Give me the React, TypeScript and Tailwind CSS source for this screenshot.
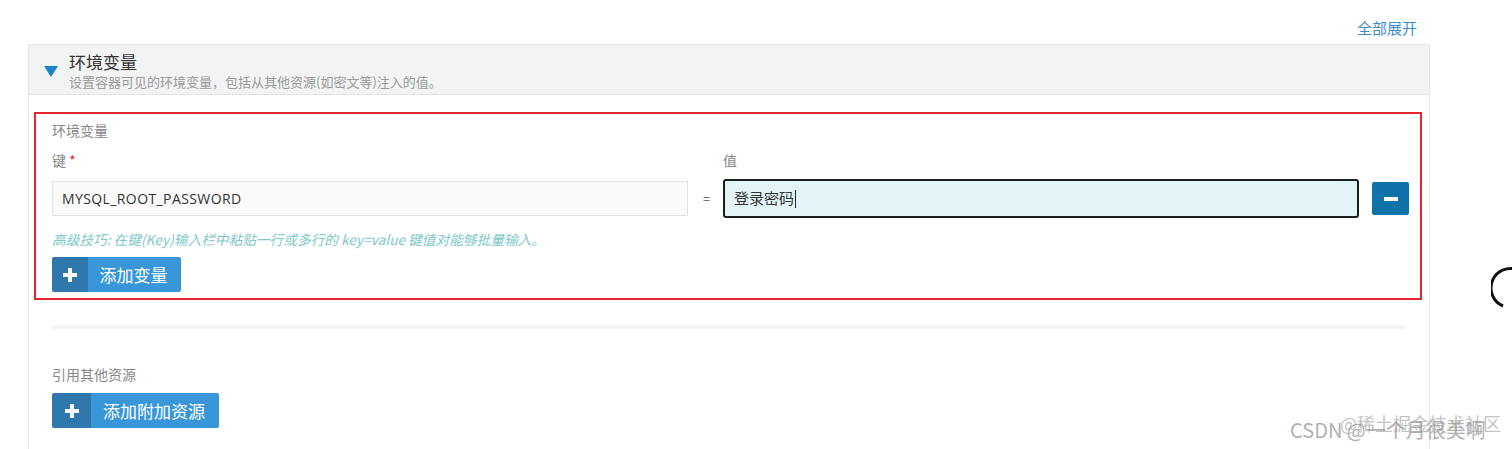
const cjk = 'font-["Noto_Sans_CJK_SC","Noto_Sans",sans-serif]';

function PlusButton({ label, leftW, width }: { label: string; leftW: string; width: string }) {
  return (
    <button className={`flex h-[35px] ${width} overflow-hidden rounded-[2px] text-white`}>
      <span className={`flex ${leftW} items-center justify-center bg-[#2f78ad]`}>
        <svg width="16" height="16" viewBox="0 0 16 16">
          <path d="M6 1h4v5h5v4h-5v5H6v-5H1V6h5z" fill="#fff" />
        </svg>
      </span>
      <span className="flex flex-1 items-center justify-center bg-[#3896d9] pr-[2px] text-[17px] leading-none">
        {label}
      </span>
    </button>
  );
}

export default function App() {
  return (
    <div className={`relative h-[449px] w-[1512px] overflow-hidden bg-white ${cjk}`}>
      {/* top link */}
      <div className="flex h-[44px] items-start justify-end pr-[95px] pt-[18px]">
        <a className="text-[15px] leading-[20px] text-[#3b8ccb]">全部展开</a>
      </div>

      {/* panel */}
      <div className="ml-[28px] h-[405px] w-[1402px] border-x border-t border-[#e4e7e7]">
        <div className="flex h-[50px] items-center border-b border-[#e1e4e4] bg-[#f2f4f4] pl-[15px]">
          <svg width="14" height="11" viewBox="0 0 14 11" className="mt-[4px]">
            <path d="M0 0h14L7 11z" fill="#1b82c9" />
          </svg>
          <div className="ml-[11px] flex flex-col">
            <span className="text-[17px] leading-[23px] text-[#333]">环境变量</span>
            <span className="text-[13px] leading-[17px] text-[#999]">设置容器可见的环境变量，包括从其他资源(如密文等)注入的值。</span>
          </div>
        </div>

        <div className="pt-[17px]">
          {/* highlighted block */}
          <div className="ml-[5px] mr-[7px] border-2 border-[#e3262b] pb-[6px] pl-[16px] pr-[10px] pt-[7px]">
            <div className="text-[14px] leading-[18px] text-[#888]">环境变量</div>
            <div className="mt-[12px] grid grid-cols-[636px_35px_636px_37px] gap-x-0">
              <div className="text-[14px] leading-[18px] text-[#888]">
                键 <span className="text-[#e3262b]">*</span>
              </div>
              <div />
              <div className="text-[14px] leading-[18px] text-[#888]">值</div>
              <div />
            </div>
            <div className="mt-[10px] flex items-center">
              <div className="flex h-[35px] w-[636px] items-center border border-[#e2e2e2] bg-[#fafafa] pl-[9px] font-['Open_Sans',sans-serif] text-[14px] tracking-[0.4px] text-[#333]">
                MYSQL_ROOT_PASSWORD
              </div>
              <div className="flex w-[35px] justify-center pl-[2px] text-[13px] text-[#555]">=</div>
              <div className="flex h-[39px] w-[636px] items-center rounded-[3px] border-2 border-[#1b1f20] bg-[#e3f4f6] pl-[9px] text-[15px] text-[#333]">
                登录密码<span className="ml-[1px] h-[18px] w-px bg-[#222]" />
              </div>
              <button className="ml-[13px] flex h-[33px] w-[37px] items-center justify-center rounded-[2px] bg-[#0f72a9]">
                <span className="h-[4px] w-[14px] bg-white" />
              </button>
            </div>
            <div className="mt-[13px] text-[13.7px] italic leading-[17px] text-[#7ec8c8]">
              高级技巧: 在键(Key)输入栏中粘贴一行或多行的 key=value 键值对能够批量输入。
            </div>
            <div className="mt-[9px]">
              <PlusButton label="添加变量" leftW="w-[36px]" width="w-[129px]" />
            </div>
          </div>

          <div className="ml-[23px] mr-[24px] mt-[25px] h-[4px] bg-[#f4f4f4]" />

          <div className="ml-[23px] mt-[36px] text-[14px] leading-[18px] text-[#888]">引用其他资源</div>
          <div className="ml-[23px] mt-[10px]">
            <PlusButton label="添加附加资源" leftW="w-[39px]" width="w-[167px]" />
          </div>
        </div>
      </div>

      {/* cut-off cursor ring at right edge */}
      <svg className="absolute left-[1491px] top-[266px]" width="30" height="46" viewBox="0 0 30 46">
        <path d="M27 4 A19 19 0 0 0 12 40" fill="none" stroke="#111" strokeWidth="3" />
      </svg>

      {/* watermark */}
      <div className="absolute left-[1290px] top-[418px] text-[20px] leading-[24px] text-[#9a9a9a]/80">
        CSDN @一个月很美啊
      </div>
      <div className="absolute left-[1340px] top-[411px] text-[18px] leading-[24px] text-[#9a9a9a]/60">
        @稀土掘金技术社区
      </div>
    </div>
  );
}
